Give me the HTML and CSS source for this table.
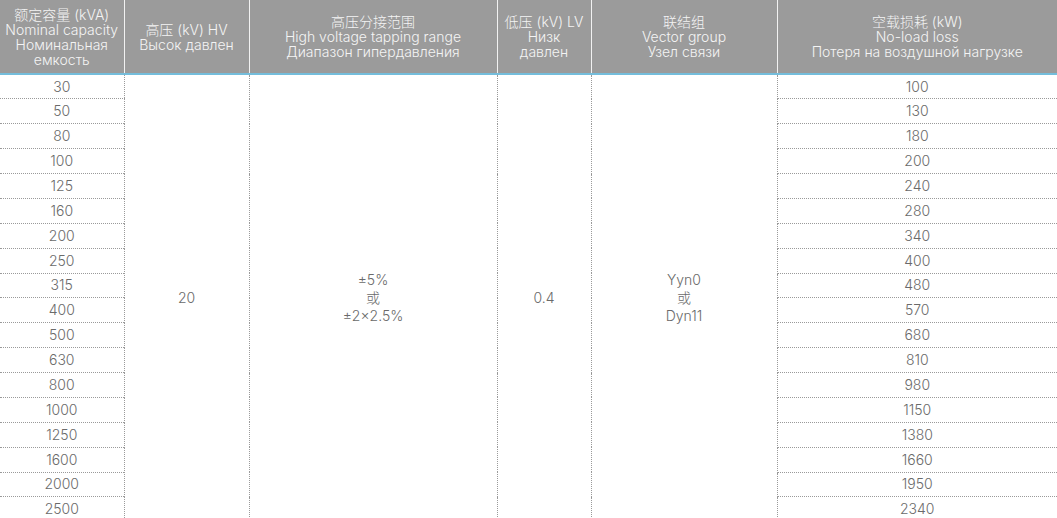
FILE: index.html
```html
<!DOCTYPE html>
<html lang="zh">
<head>
<meta charset="utf-8">
<link rel="stylesheet" href="styles.css">
</head>
<body>
<table class="spec">
  <colgroup>
    <col class="c1"><col class="c2"><col class="c3"><col class="c4"><col class="c5"><col class="c6">
  </colgroup>
  <thead>
    <tr>
      <th>额定容量 (kVA)<br>Nominal capacity<br>Номинальная<br>емкость</th>
      <th>高压 (kV) HV<br>Высок давлен</th>
      <th>高压分接范围<br>High voltage tapping range<br>Диапазон гипердавления</th>
      <th>低压 (kV) LV<br>Низк<br>давлен</th>
      <th>联结组<br>Vector group<br>Узел связи</th>
      <th>空载损耗 (kW)<br>No-load loss<br>Потеря на воздушной нагрузке</th>
    </tr>
  </thead>
  <tbody>
    <tr><td>30</td><td rowspan="18">20</td><td rowspan="18">±5%<br>或<br>±2×2.5%</td><td rowspan="18">0.4</td><td rowspan="18">Yyn0<br>或<br>Dyn11</td><td>100</td></tr>
    <tr><td>50</td><td>130</td></tr>
    <tr><td>80</td><td>180</td></tr>
    <tr><td>100</td><td>200</td></tr>
    <tr><td>125</td><td>240</td></tr>
    <tr><td>160</td><td>280</td></tr>
    <tr><td>200</td><td>340</td></tr>
    <tr><td>250</td><td>400</td></tr>
    <tr><td>315</td><td>480</td></tr>
    <tr><td>400</td><td>570</td></tr>
    <tr><td>500</td><td>680</td></tr>
    <tr><td>630</td><td>810</td></tr>
    <tr><td>800</td><td>980</td></tr>
    <tr><td>1000</td><td>1150</td></tr>
    <tr><td>1250</td><td>1380</td></tr>
    <tr><td>1600</td><td>1660</td></tr>
    <tr><td>2000</td><td>1950</td></tr>
    <tr><td>2500</td><td>2340</td></tr>
  </tbody>
</table>
</body>
</html>
```
FILE: styles.css
```css
html, body {
  margin: 0;
  padding: 0;
  background: #ffffff;
}
body {
  font-family: Inter, "Noto Sans CJK SC", sans-serif;
  font-weight: 300;
}
.spec {
  width: 1057px;
  border-collapse: collapse;
  table-layout: fixed;
}
.c1 { width: 124px; }
.c2 { width: 125px; }
.c3 { width: 248px; }
.c4 { width: 94px; }
.c5 { width: 186px; }
.c6 { width: 280px; }

.spec th {
  background: #9b9b9b;
  color: #f4f4f4;
  font-weight: 300;
  font-size: 14px;
  line-height: 15px;
  height: 73px;
  padding: 0;
  text-align: center;
  vertical-align: middle;
  border-left: 1px solid #f2f2f2;
  border-bottom: 2px solid #74bddb;
}
.spec th:first-child { border-left: none; }

.spec td {
  color: #6a6a6a;
  font-size: 14px;
  line-height: 18px;
  height: 24.88px;
  padding: 0;
  text-align: center;
  vertical-align: middle;
  border-left: 1px dotted #9a9a9a;
  border-bottom: 1px dotted #9a9a9a;
  box-sizing: border-box;
}
.spec td:first-child { border-left: none; }
```
